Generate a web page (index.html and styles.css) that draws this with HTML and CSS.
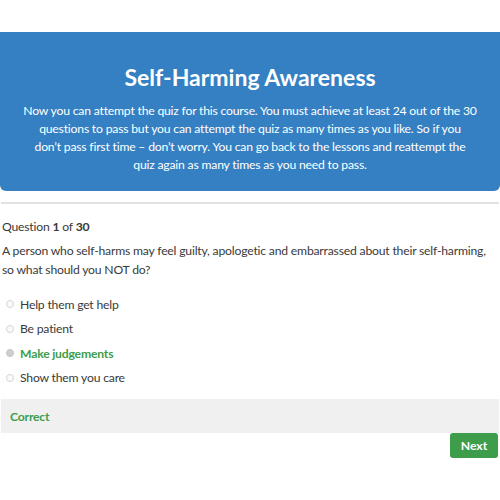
FILE: index.html
```html
<!DOCTYPE html>
<html>
<head>
    <meta charset="utf-8">
    <title> Self-Harming Awareness Quiz </title>
    <link rel="stylesheet" href="styles.css">
</head>
<body>
    <div class="quiz">
        <!-- course header -->
        <div class="banner">
            <h1>Self-Harming Awareness</h1>
            <p>Now you can attempt the quiz for this course. You must achieve at least 24 out of the 30 questions to pass but you can attempt the quiz as many times as you like. So if you don’t&nbsp;pass first time – don’t worry. You can go back to the lessons and reattempt the quiz again as many times as you need to pass.</p>
        </div>

        <hr class="rule">

        <p class="counter">Question <b>1</b> of <b>30</b></p>
        <p class="question">A person who self-harms may feel guilty, apologetic and embarrassed about their self-harming, so what should you NOT do?</p>

        <ul class="answers">
            <li><span class="radio"></span> Help them get help</li>
            <li><span class="radio"></span> Be patient</li>
            <li class="right"><span class="radio checked"></span> Make judgements</li>
            <li><span class="radio"></span> Show them you care</li>
        </ul>

        <div class="result">Correct</div>

        <div class="actions">
            <button class="next">Next</button>
        </div>
    </div>
</body>
</html>
```

FILE: styles.css
```css
:root {
    --blue:   #3480c3;
    --green:  #3d9d4b;
    --text:   #3a3a3a;
    --line:   #e2e2e2;
    --panel:  #f0f0f0;
}

* {
    box-sizing: border-box;
}

body {
    margin: 0;
    font-family: Lato, sans-serif;
    font-size: 12.2px;
    letter-spacing: -0.2px;
    color: var( --text );
    background: #fff;
}

.quiz {
    padding-top: 32px;
}

.banner {
    background-color: var( --blue );
    color: #fff;
    text-align: center;
    border-radius: 0 0 6px 6px;
    padding: 30px 23px 18px;
    height: 159px;
}

.banner h1 {
    margin: 0 0 10px;
    font-size: 23px;
    font-weight: 700;
    letter-spacing: 0;
    line-height: 30px;
}

.banner p {
    margin: 0;
    line-height: 18px;
}

.rule {
    margin: 11px 1px 0;
    border: 0;
    height: 2px;
    background: var( --line );
}

.counter {
    margin: 14px 0 0 2px;
    line-height: 18px;
}

.question {
    margin: 5px 0 0 2px;
    line-height: 19px;
}

.answers {
    list-style: none;
    margin: 13px 0 0;
    padding: 0 0 0 6px;
}

.answers li {
    display: flex;
    align-items: center;
    gap: 6px;
    height: 24.5px;
}

.answers .right {
    color: var( --green );
    font-weight: 700;
}

.radio {
    width: 8px;
    height: 8px;
    border-radius: 50%;
    border: 1px solid #d4d4d4;
    background: #fafafa;
}

.radio.checked {
    background: #cfcfcf;
    border-color: #c4c4c4;
}

.result {
    margin: 9px 1px 0;
    height: 34px;
    padding: 0 9px;
    display: flex;
    align-items: center;
    background: var( --panel );
    color: var( --green );
    font-weight: 700;
}

.actions {
    display: flex;
    justify-content: flex-end;
    padding: 0 2px;
}

.next {
    width: 48px;
    height: 25px;
    border: 0;
    border-radius: 3px;
    background: var( --green );
    color: #fff;
    font-family: inherit;
    font-size: inherit;
    letter-spacing: 0;
    font-weight: 700;
}
```
